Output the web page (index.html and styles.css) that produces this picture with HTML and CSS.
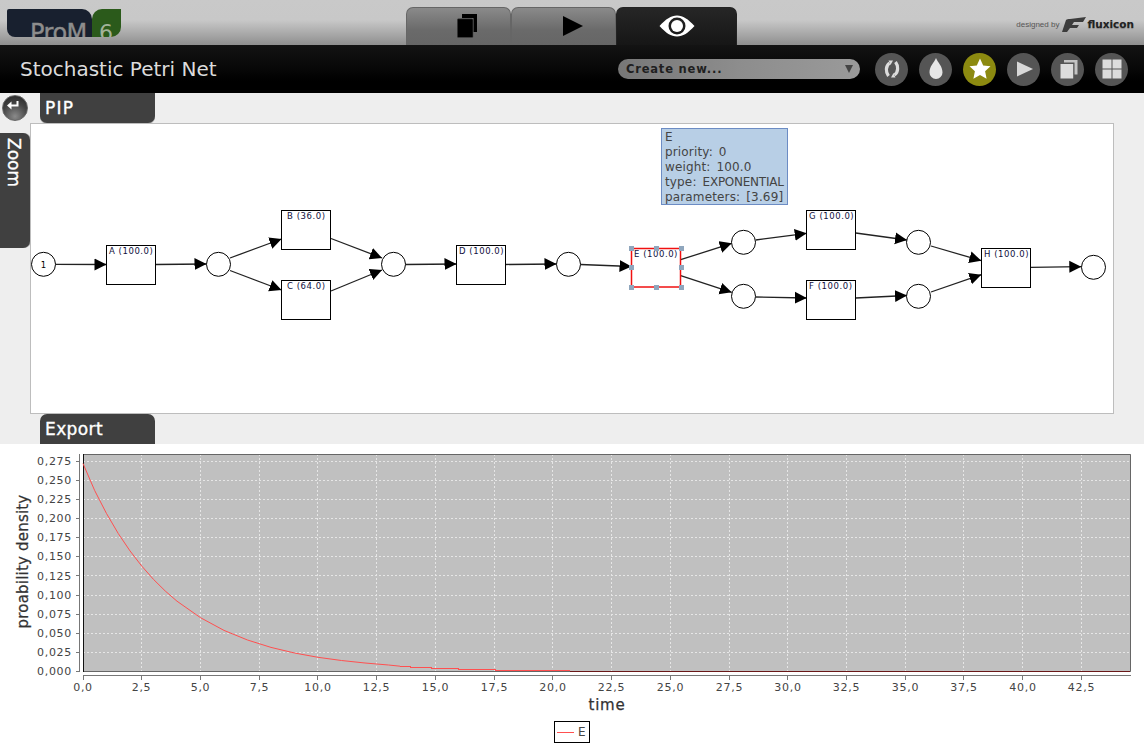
FILE: index.html
```html
<!DOCTYPE html>
<html lang="en">
<head>
<meta charset="utf-8">
<title>Stochastic Petri Net</title>
<link rel="stylesheet" href="styles.css">
</head>
<body>
<div class="app">
  <header class="topbar">
    <div class="logo">
      <div class="logo-blue"><span>ProM</span></div>
      <div class="logo-leaf"><span>6</span></div>
    </div>
    <nav class="tabs">
      <div class="tab">
        <svg width="20" height="24" viewBox="0 0 20 24"><path d="M5 0H20V18H16.500V4H5z" fill="#000"/><rect x=".3" y="4.800" width="15.700" height="18.800" rx="1" fill="#000" stroke="#4a4a4a" stroke-width=".6"/></svg>
      </div>
      <div class="tab tab-second">
        <svg width="20" height="20" viewBox="0 0 20 20"><path d="M0 0L20 10L0 20z" fill="#000"/></svg>
      </div>
      <div class="tab tab-active">
        <svg width="36" height="22" viewBox="0 0 36 22"><path fill-rule="evenodd" d="M.5 11C7 4 12 .5 18 .5S29 4 35.500 11C29 18 24 21.500 18 21.500S7 18 .5 11zM18 2.500a8.500 8.500 0 1 0 0 17a8.500 8.500 0 1 0 0-17z" fill="#fff"/><circle cx="18" cy="11" r="6" fill="#fff"/></svg>
      </div>
    </nav>
    <div class="brand">
      <span class="brand-by">designed by</span>
      <svg width="24" height="15" viewBox="0 0 24 15"><path d="M4 3C5 2 6 2 8 2L24 0L21 5H12L10 8H17L15 11H8L5 15H0z" fill="#3c3c3c"/></svg>
      <span class="brand-name">fluxicon</span>
    </div>
  </header>

  <section class="titlebar">
    <h1 class="title">Stochastic Petri Net</h1>
    <div class="select"><span>Create new...</span><i class="select-arrow"></i></div>
    <div class="actions">
      <div class="round"><svg width="20" height="24" viewBox="0 0 20 24"><path d="M7.500 6C3.500 9 3.500 15 6.500 19M12.500 18C16.500 15 16.500 9 13.500 5" fill="none" stroke="#dcdcdc" stroke-width="3.200"/><path d="M6.500 3.500L11 3.500L8.500 8zM13.500 20.500L9 20.500L11.500 16z" fill="#dcdcdc"/></svg></div>
      <div class="round"><svg width="20" height="22" viewBox="0 0 20 22"><path d="M10 0C12 5 16.500 8 16.500 14.500a6.500 6.500 0 0 1-13 0C3.500 8 8 5 10 0z" fill="#e6e6e6"/></svg></div>
      <div class="round round-on"><svg width="24" height="24" viewBox="0 0 24 24"><path d="M12 1.500l3.200 7 7.300.800-5.400 5 1.500 7.500L12 18l-6.600 3.800 1.500-7.500-5.400-5 7.300-.800z" fill="#fff"/></svg></div>
      <div class="round"><svg width="20" height="20" viewBox="0 0 20 20"><path d="M3 2.500L19 10L3 17.500z" fill="#d8d8d8"/></svg></div>
      <div class="round"><svg width="20" height="20" viewBox="0 0 20 20"><path d="M6 1H19.500V15.500H16.500V3.500H6z" fill="#c4c4c4"/><rect x="2.500" y="5" width="12.700" height="14.500" fill="#dcdcdc"/></svg></div>
      <div class="round"><svg width="20" height="20" viewBox="0 0 20 20"><path d="M.5 .5h9v9h-9zM10.500 .5h9v9h-9zM.5 10.500h9v9h-9zM10.500 10.500h9v9h-9z" fill="#dcdcdc"/></svg></div>
    </div>
  </section>

  <main class="workspace">
    <div class="back"><svg width="12" height="10" viewBox="0 0 12 10"><path d="M9.500 0H11.500V5.500H4.500V8.500L0 4.500L4.500 .5V3.500H9.500z" fill="#fff"/></svg></div>
    <div class="pane-tab pane-tab-pip">PIP</div>
    <div class="zoom-tab"><span>Zoom</span></div>
    <div class="canvas">
      <svg class="net" width="1082" height="289" viewBox="31 124 1082 289">
        <defs>
          <marker id="head" markerUnits="userSpaceOnUse" markerWidth="13" markerHeight="13" refX="12" refY="6.500" orient="auto"><path d="M0 .5L12 6.500L0 12.500z" fill="#000"/></marker>
        </defs>
        <g class="edges">
          <line x1="55.500" y1="264.300" x2="106.500" y2="264.500"/>
          <line x1="155.500" y1="264.500" x2="206.500" y2="264"/>
          <line x1="230" y1="258" x2="281.500" y2="239"/>
          <line x1="230" y1="270.500" x2="281.500" y2="290"/>
          <line x1="331" y1="238.500" x2="382" y2="258"/>
          <line x1="331" y1="291" x2="382" y2="270"/>
          <line x1="405.500" y1="264.500" x2="456.500" y2="264"/>
          <line x1="505.500" y1="264.500" x2="556.500" y2="264"/>
          <line x1="580.500" y1="264.500" x2="631.500" y2="266.500"/>
          <line x1="680.700" y1="259.700" x2="731.700" y2="243.300"/>
          <line x1="680.700" y1="275.700" x2="731.700" y2="292.300"/>
          <line x1="755.700" y1="240" x2="806.700" y2="233.300"/>
          <line x1="755.700" y1="297" x2="806.700" y2="298"/>
          <line x1="855.700" y1="233" x2="907" y2="240"/>
          <line x1="855.700" y1="298" x2="907" y2="295.500"/>
          <line x1="931" y1="246" x2="981.300" y2="260.700"/>
          <line x1="931" y1="292" x2="981.300" y2="274.700"/>
          <line x1="1030.700" y1="267.300" x2="1081.300" y2="266.700"/>
        </g>
        <g class="places">
          <circle cx="43.500" cy="264.300" r="12"/>
          <circle cx="218.500" cy="264.300" r="12"/>
          <circle cx="393.500" cy="264.300" r="12"/>
          <circle cx="568.500" cy="264.300" r="12"/>
          <circle cx="743.500" cy="242.300" r="12"/>
          <circle cx="743.500" cy="296.300" r="12"/>
          <circle cx="918.500" cy="242.300" r="12"/>
          <circle cx="918.500" cy="296.300" r="12"/>
          <circle cx="1093.500" cy="267.300" r="12"/>
        </g>
        <text class="token" x="43.500" y="267.500">1</text>
        <g class="trans">
          <rect x="106.500" y="245.500" width="49" height="39"/>
          <rect x="281.500" y="210.500" width="49" height="39"/>
          <rect x="281.500" y="280.500" width="49" height="39"/>
          <rect x="456.500" y="245.500" width="49" height="39"/>
          <rect x="806.500" y="210.500" width="49" height="39"/>
          <rect x="806.500" y="280.500" width="49" height="39"/>
          <rect x="981.500" y="248.500" width="49" height="39"/>
        </g>
        <rect class="selected" x="631.500" y="248.500" width="49" height="38.500"/>
        <g class="labels">
          <text x="109" y="253.500">A (100.0)</text>
          <text x="287" y="218.500">B (36.0)</text>
          <text x="287" y="288.500">C (64.0)</text>
          <text x="459" y="253.500">D (100.0)</text>
          <text x="634" y="256.500">E (100.0)</text>
          <text x="809" y="218.500">G (100.0)</text>
          <text x="809" y="288.500">F (100.0)</text>
          <text x="984" y="256.500">H (100.0)</text>
        </g>
        <g class="handles">
          <rect x="629" y="246" width="5" height="5"/>
          <rect x="654" y="246" width="5" height="5"/>
          <rect x="679" y="246" width="5" height="5"/>
          <rect x="629" y="265" width="5" height="5"/>
          <rect x="679" y="265" width="5" height="5"/>
          <rect x="629" y="285" width="5" height="5"/>
          <rect x="654" y="285" width="5" height="5"/>
          <rect x="679" y="285" width="5" height="5"/>
        </g>
      </svg>
      <div class="tooltip">E<br>priority: 0<br>weight: 100.0<br>type: <span class="tight">EXPONENTIAL</span><br>parameters: [3.69]</div>
    </div>
    <div class="pane-tab pane-tab-export">Export</div>
  </main>

  <section class="chart">
    <svg width="1144" height="300" viewBox="0 444 1144 300">
      <rect class="plot" x="83" y="454" width="1048" height="218"/>
      <g class="grid">
        <path d="M141.500 454V672M200.500 454V672M259.500 454V672M317.500 454V672M376.500 454V672M435.500 454V672M494.500 454V672M552.500 454V672M611.500 454V672M670.500 454V672M729.500 454V672M787.500 454V672M846.500 454V672M905.500 454V672M963.500 454V672M1022.500 454V672M1081.500 454V672"/>
        <path d="M83 461.500H1131M83 480.500H1131M83 499.500H1131M83 518.500H1131M83 537.500H1131M83 556.500H1131M83 575.500H1131M83 595.500H1131M83 614.500H1131M83 633.500H1131M83 652.500H1131"/>
      </g>
      <path class="frame" d="M83 454.500H1130.500V671.500H83"/>
      <path class="axis-y" d="M83.500 454V672"/>
      <path class="axis-x" d="M83 675.500H1131M79.500 454V672"/>
      <path class="ticks" d="M76 461.500H79M76 480.500H79M76 499.500H79M76 518.500H79M76 537.500H79M76 556.500H79M76 575.500H79M76 595.500H79M76 614.500H79M76 633.500H79M76 652.500H79M76 671.500H79M83.500 675V680M141.500 675V680M200.500 675V680M259.500 675V680M317.500 675V680M376.500 675V680M435.500 675V680M494.500 675V680M552.500 675V680M611.500 675V680M670.500 675V680M729.500 675V680M787.500 675V680M846.500 675V680M905.500 675V680M963.500 675V680M1022.500 675V680M1081.500 675V680"/>
      <polyline class="curve" points="83,463.500 94.750,490.700 106.500,513.500 118.250,533.500 130,550.900 141.750,566.100 153.500,579.400 165.250,591 177,601.200 200.500,617.700 224,630.400 247.500,640 271,647.400 294.500,653 318,657.300 341.500,660.500 365,663 388.500,665 400,666.200"/>
      <path class="curve-steps" d="M400 666.500H410V667.500H431V668.500H458V669.500H495V670.500H570"/>
      <path class="curve-tail" d="M570 671.500H1130"/>
      <g class="ylabels">
        <text x="72" y="465">0,275</text><text x="72" y="484">0,250</text><text x="72" y="503">0,225</text><text x="72" y="522">0,200</text><text x="72" y="541">0,175</text><text x="72" y="560">0,150</text><text x="72" y="580">0,125</text><text x="72" y="599">0,100</text><text x="72" y="618">0,075</text><text x="72" y="637">0,050</text><text x="72" y="656">0,025</text><text x="72" y="675">0,000</text>
      </g>
      <g class="xlabels">
        <text x="83" y="691">0,0</text><text x="141.500" y="691">2,5</text><text x="200.500" y="691">5,0</text><text x="259.500" y="691">7,5</text><text x="318" y="691">10,0</text><text x="376.500" y="691">12,5</text><text x="435.500" y="691">15,0</text><text x="494.500" y="691">17,5</text><text x="553" y="691">20,0</text><text x="611.500" y="691">22,5</text><text x="670.500" y="691">25,0</text><text x="729.500" y="691">27,5</text><text x="788" y="691">30,0</text><text x="846.500" y="691">32,5</text><text x="905.500" y="691">35,0</text><text x="964" y="691">37,5</text><text x="1023" y="691">40,0</text><text x="1081.500" y="691">42,5</text>
      </g>
      <text class="axis-title axis-time" x="607" y="709.500">time</text>
      <text class="axis-title" transform="translate(28 561.500) rotate(-90)">proability density</text>
      <rect class="legend" x="554.500" y="721.500" width="35" height="21"/>
      <path class="legend-key" d="M557 732.500H574"/>
      <text class="legend-text" x="578" y="736">E</text>
    </svg>
  </section>
</div>
</body>
</html>
```

FILE: styles.css
```css
* { box-sizing: border-box; }
html, body { margin: 0; padding: 0; }
body { width: 1144px; height: 744px; overflow: hidden; background: #fff; font-family: "DejaVu Sans", sans-serif; }
.app { display: flex; flex-direction: column; width: 1144px; height: 744px; }

.topbar { height: 45px; display: grid; grid-template-columns: 406px 331px 1fr; background: linear-gradient(#c9c9c9 0, #c8c8c8 20px, #8f8f8f 45px); }
.logo { display: flex; align-items: flex-start; margin: 9px 0 0 7px; height: 28px; }
.logo-blue { width: 85px; height: 28px; overflow: hidden; background: #18202f; border-radius: 2px 10px 0 8px; padding-left: 23px; }
.logo-blue span { display: block; margin-top: 10px; font: 24px/28px "DejaVu Sans", sans-serif; color: #8d8d8d; letter-spacing: -0.5px; -webkit-text-stroke: .4px #8d8d8d; }
.logo-leaf { width: 29px; height: 28px; overflow: hidden; background: #2b5a1b; border-radius: 10px 0 10px 0; padding-left: 4px; }
.logo-leaf span { display: block; margin: 10px 0 0 3px; font: 22px/28px "DejaVu Sans", sans-serif; color: #a3b39a; }

.tabs { display: flex; align-items: flex-end; height: 45px; }
.tab { width: 105px; height: 38px; display: flex; align-items: center; justify-content: center; padding-left: 16px; background: linear-gradient(#8a8a8a, #6a6a6a 60%, #666); border: 1px solid #666; border-bottom: 0; border-radius: 7px 7px 0 0; }
.tab-second { padding-left: 19px; }
.tab-active { width: 121px; padding-left: 0; background: linear-gradient(#262626, #161616); border-color: #222; }
.tab svg { display: block; margin-top: -1px; }

.brand { display: flex; align-items: center; justify-content: flex-end; padding: 3px 10px 0 0; gap: 1px; }
.brand-by { font: 8px "Liberation Sans", sans-serif; color: #555; margin-right: 2px; }
.brand-name { font: bold 10.500px "DejaVu Sans", sans-serif; color: #222; text-shadow: 0 1px 1px #888; }

.titlebar { height: 48px; display: flex; align-items: center; background: linear-gradient(#131313, #0a0a0a 40%, #000 75%); padding-left: 20px; }
.title { margin: 0; width: 598px; font: 400 20px "DejaVu Sans", sans-serif; color: #dcdcdc; }
.select { width: 242px; height: 20px; margin-top: -1px; display: flex; align-items: center; justify-content: space-between; padding: 0 7px 0 8px; border-radius: 10px; background: linear-gradient(90deg, #777, #8d8d8d 50%, #9a9a9a); }
.select span { font: bold 11.500px "DejaVu Sans", sans-serif; color: #1f1f1f; letter-spacing: 0.8px; }
.select-arrow { width: 0; height: 0; border-left: 4px solid transparent; border-right: 4px solid transparent; border-top: 8px solid #444; }
.actions { display: flex; gap: 11px; margin-left: 15px; }
.round { width: 33px; height: 33px; border-radius: 50%; background: #555; display: flex; align-items: center; justify-content: center; }
.round-on { background: #8c8a10; }

.workspace { height: 351px; background: #eee; display: grid; grid-template-columns: 30px 1084px; grid-template-rows: 30px 291px 30px; }
.back { grid-column: 1; grid-row: 1; width: 26px; height: 26px; margin: 2px 0 0 2px; border-radius: 50%; background: radial-gradient(circle at 50% 85%, #8a8a8a, #444 55%, #222); border: 1px solid #666; padding: 5px 0 0 4px; }
.back svg { display: block; }
.pane-tab { width: 115px; height: 30px; margin-left: 10px; padding: 4px 0 0 5px; background: #404040; color: #fff; font: 400 17px/22px "DejaVu Sans", sans-serif; letter-spacing: .4px; -webkit-text-stroke: .35px #fff; }
.pane-tab-pip { grid-column: 2; grid-row: 1; border-radius: 0 0 7px 7px; box-shadow: 0 1px 0 #aaa; letter-spacing: 1.200px; }
.pane-tab-export { grid-column: 2; grid-row: 3; border-radius: 7px 7px 0 0; }
.zoom-tab { grid-column: 1; grid-row: 2; width: 30px; height: 115px; margin-top: 10px; background: #404040; border-radius: 0 7px 7px 0; box-shadow: 1px 0 0 #aaa; padding: 5px 0 0 5px; color: #fff; font: 400 17px/18px "DejaVu Sans", sans-serif; -webkit-text-stroke: .35px #fff; }
.zoom-tab span { display: block; writing-mode: vertical-rl; }

.canvas { position: relative; grid-column: 2; grid-row: 2; background: #fff; border: 1px solid #bdbdbd; }
.net { display: block; }
.edges line { stroke: #222; stroke-width: 1.300; marker-end: url(#head); }
.places circle { fill: #fff; stroke: #000; stroke-width: 1; }
.trans rect { fill: #fff; stroke: #000; stroke-width: 1; }
.selected { fill: #fff; stroke: #f01010; stroke-width: 1.500; }
.handles rect { fill: #8fa6bd; }
.labels text { font: 8.500px "DejaVu Sans", sans-serif; fill: #101040; letter-spacing: .55px; }
.token { font: 8.500px "DejaVu Sans", sans-serif; fill: #000; text-anchor: middle; }
.tooltip { position: absolute; left: 630px; top: 4px; width: 127px; height: 77px; padding: 1px 3px; background: #b8cfe6; border: 1px solid #6c8cc4; color: #444; font: 12px/15px "DejaVu Sans", sans-serif; white-space: nowrap; letter-spacing: .15px; word-spacing: 2px; }
.tight { letter-spacing: -.25px; }

.chart { height: 300px; background: #fff; }
.chart svg { display: block; }
.plot { fill: #c0c0c0; }
.grid path { fill: none; stroke: #e6e6e6; stroke-width: 1; stroke-dasharray: 2 2; }
.frame { stroke: #666; fill: none; }
.axis-y { stroke: #111; fill: none; }
.axis-x { stroke: #777; fill: none; }
.ticks { stroke: #777; fill: none; }
.curve { fill: none; stroke: #ff5050; stroke-width: 1; }
.curve-steps { fill: none; stroke: #ff5050; stroke-width: 1; shape-rendering: crispEdges; }
.curve-tail { stroke: #6a1818; fill: none; }
.ylabels text { font: 11px "DejaVu Sans", sans-serif; fill: #444; text-anchor: end; letter-spacing: .7px; }
.xlabels text { font: 11px "DejaVu Sans", sans-serif; fill: #444; text-anchor: middle; letter-spacing: .7px; }
.axis-title { font: 15px "DejaVu Sans", sans-serif; fill: #333; stroke: #333; stroke-width: .25px; text-anchor: middle; letter-spacing: .2px; }
.axis-time { letter-spacing: .8px; }
.legend { fill: #fff; stroke: #000; }
.legend-key { stroke: #ff5050; fill: none; }
.legend-text { font: 12px "DejaVu Sans", sans-serif; fill: #444; }
```
